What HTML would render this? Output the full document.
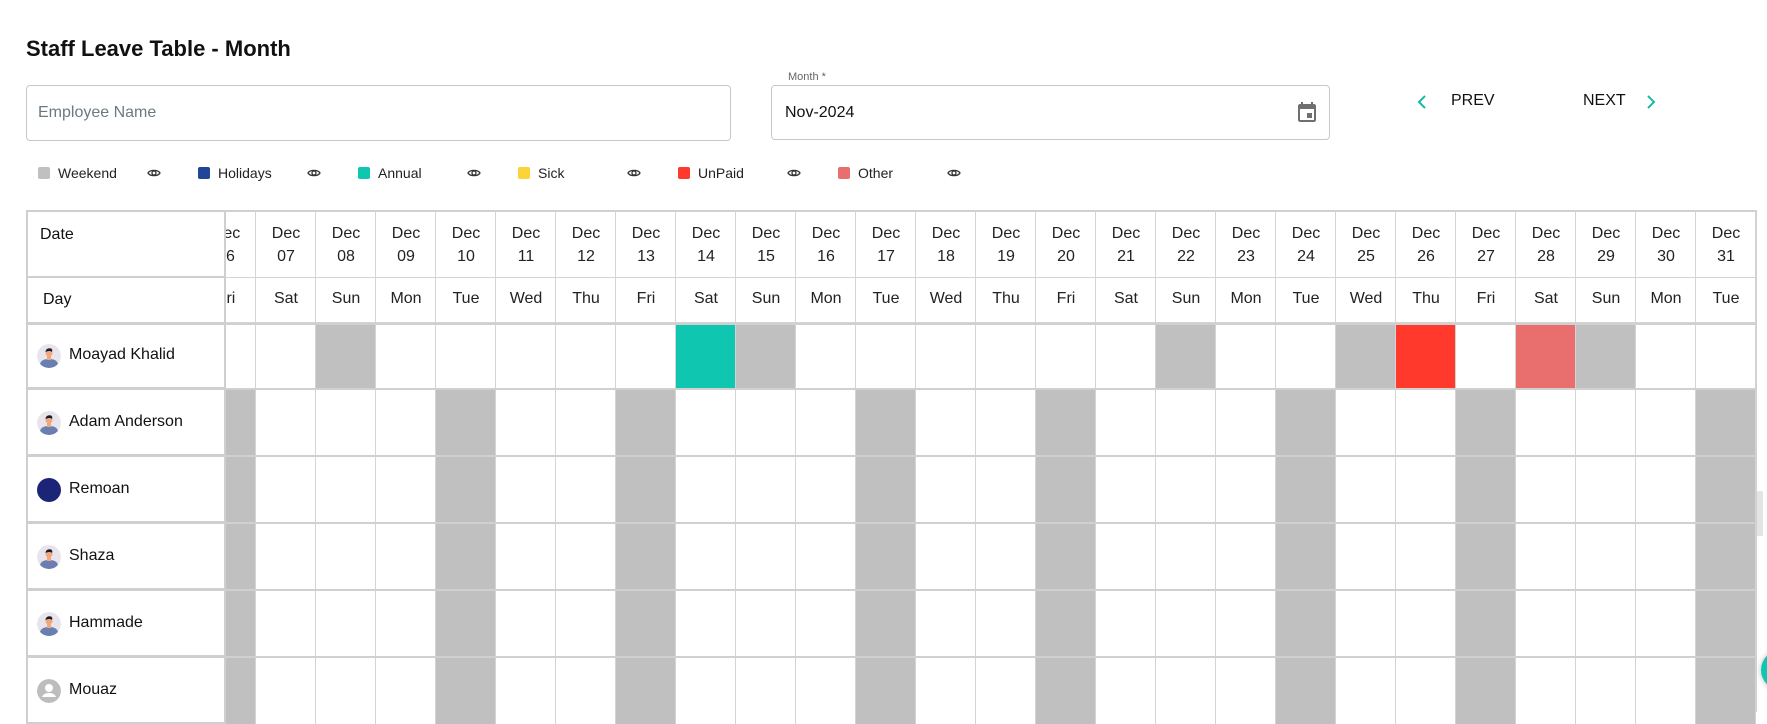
<!DOCTYPE html>
<html><head><meta charset="utf-8"><style>
*{box-sizing:border-box;margin:0;padding:0}
body{width:1767px;height:712px;overflow:hidden;background:#fff;font-family:"Liberation Sans",sans-serif;color:#111;position:relative}
.abs{position:absolute}
h1{position:absolute;left:26px;top:36px;font-size:22px;font-weight:bold;color:#111}
.inp{position:absolute;border:1px solid #c8c8c8;border-radius:4px}
.lg{position:absolute;top:166px;font-size:14px;color:#222;line-height:14px}
.sq{position:absolute;top:167px;width:12px;height:12px;border-radius:2px}
.eye{position:absolute;top:167px}
.cell{position:absolute;border-right:1px solid #d4d4d4;text-align:center;font-size:16px;color:#222}
.hl{position:absolute;left:26px;width:200px;background:#fff;border:2px solid #cfcfcf;}
.nm{position:absolute;left:69px;font-size:16px;color:#111}
.av{position:absolute;left:37px;width:24px;height:24px;border-radius:50%}
</style></head><body>
<h1>Staff Leave Table - Month</h1>
<div class="inp" style="left:26px;top:85px;width:705px;height:56px"></div>
<div class="abs" style="left:38px;top:104px;font-size:16px;color:#6b7a80">Employee Name</div>
<div class="inp" style="left:771px;top:85px;width:559px;height:55px"></div>
<div class="abs" style="left:784px;top:71px;font-size:11px;color:#666;background:#fff;padding:0 4px">Month *</div>
<div class="abs" style="left:785px;top:104px;font-size:16px;color:#111">Nov-2024</div>
<svg class="abs" style="left:1295px;top:100px" width="24" height="24" viewBox="0 0 24 24"><path fill="#6f6f6f" d="M19 4h-1V2h-2v2H8V2H6v2H5c-1.1 0-2 .9-2 2v14c0 1.1.9 2 2 2h14c1.1 0 2-.9 2-2V6c0-1.1-.9-2-2-2zm0 16H5V9h14v11zM12 13h5v5h-5z"/></svg>
<svg class="abs" style="left:1415px;top:93px" width="14" height="18" viewBox="0 0 14 18"><path d="M10 3L4 9l6 6" stroke="#19b9a6" stroke-width="2" fill="none"/></svg>
<div class="abs" style="left:1451px;top:92px;font-size:16px;color:#111">PREV</div>
<div class="abs" style="left:1583px;top:92px;font-size:16px;color:#111">NEXT</div>
<svg class="abs" style="left:1644px;top:93px" width="14" height="18" viewBox="0 0 14 18"><path d="M4 3l6 6-6 6" stroke="#19b9a6" stroke-width="2" fill="none"/></svg>
<div id="legend"></div>
<div id="tbl"></div>
<script>
var L=[["Weekend","#c0c0c0"],["Holidays","#1f4699"],["Annual","#0fc6b0"],["Sick","#fdd33a"],["UnPaid","#ff3a2d"],["Other","#e96f6e"]];
var h="";
L.forEach(function(l,i){var x=38+i*160;
h+='<div class="sq" style="left:'+x+'px;background:'+l[1]+'"></div><div class="lg" style="left:'+(x+20)+'px">'+l[0]+'</div>'+
'<svg class="eye" style="left:'+(x+109)+'px" width="14" height="12" viewBox="0 0 14 12"><path d="M1 6C3 2.5 11 2.5 13 6C11 9.5 3 9.5 1 6Z" fill="none" stroke="#333" stroke-width="1.3"/><circle cx="7" cy="6" r="2" fill="none" stroke="#333" stroke-width="1.3"/></svg>';});
document.getElementById("legend").innerHTML=h;
var days=["Sun","Mon","Tue","Wed","Thu","Fri","Sat"];
var t='<div class="abs" style="left:26px;top:210px;width:1731px;height:2px;background:#d0d0d0"></div>';
var rows=[[324,389],[389,456],[456,523],[523,590],[590,657],[657,724]];
for(var d=6;d<=31;d++){var x=256+(d-7)*60;var dn=days[(d+6)%7];
t+='<div class="cell" style="left:'+x+'px;top:210px;width:60px;height:113px;border-bottom:1px solid #d4d4d4"></div>';
t+='<div class="abs" style="left:'+x+'px;top:222px;width:60px;text-align:center;font-size:16px;line-height:23px;color:#222">Dec<br>'+(d<10?"0"+d:d)+'</div>';
t+='<div class="abs" style="left:'+x+'px;top:277px;width:60px;height:1px;background:#d4d4d4"></div>';
t+='<div class="abs" style="left:'+x+'px;top:290px;width:60px;text-align:center;font-size:16px;color:#222">'+dn+'</div>';
rows.forEach(function(r,ri){var c="#fff";
if(ri==0){if([8,15,22,25,29].indexOf(d)>=0)c="#c0c0c0";if(d==14)c="#0fc6b0";if(d==26)c="#ff3a2d";if(d==28)c="#e96f6e";}
else{if(dn=="Tue"||dn=="Fri")c="#c0c0c0";}
t+='<div class="abs" style="left:'+x+'px;top:'+r[0]+'px;width:60px;height:'+(r[1]-r[0])+'px;background:'+c+';border-right:1px solid #d4d4d4"></div>';});
}
rows.forEach(function(r){t+='<div class="abs" style="left:26px;top:'+(r[0]-1)+'px;width:1731px;height:2px;background:#d0d0d0"></div>';});
t+='<div class="abs" style="left:1756px;top:210px;width:1px;height:502px;background:#d0d0d0"></div>';
t+='<div class="abs" style="left:26px;top:210px;width:2px;height:502px;background:#d0d0d0"></div>';
t+='<div class="hl" style="top:210px;height:68px"></div><div class="hl" style="top:276px;height:48px"></div>';
t+='<div class="abs" style="left:40px;top:226px;font-size:16px">Date</div><div class="abs" style="left:43px;top:291px;font-size:16px">Day</div>';
var names=["Moayad Khalid","Adam Anderson","Remoan","Shaza","Hammade","Mouaz"];
rows.forEach(function(r,i){
t+='<div class="hl" style="top:'+(r[0]-1)+'px;height:'+(r[1]-r[0]+1)+'px"></div>';
var cy=r[0]+(i==0?32:34);
var av;
if(i==2)av='<div class="av" style="top:'+(cy-12)+'px;background:#1c2478"></div>';
else if(i==5)av='<svg class="av" style="top:'+(cy-12)+'px" viewBox="0 0 24 24"><circle cx="12" cy="12" r="12" fill="#bdbdbd"/><circle cx="12" cy="9" r="4" fill="#fff"/><path d="M5 18c1-3 4-4 7-4s6 1 7 4z" fill="#fff"/></svg>';
else av='<svg class="av" style="top:'+(cy-12)+'px" viewBox="0 0 24 24"><circle cx="12" cy="12" r="12" fill="#e8e4ec"/><path d="M3 20c1-4 5-5 9-5s8 1 9 5c-2 3-6 4-9 4s-7-1-9-4z" fill="#6a7eb1"/><rect x="10" y="11" width="4" height="5" fill="#f2a77b"/><circle cx="12" cy="9" r="3.5" fill="#f2a77b"/><path d="M8.5 8c0-3 3-4.5 5.5-3.5 1.5.7 1.5 2 1 3.5-1-1-3-1.5-6.5 0z" fill="#1b1b2e"/></svg>';
t+=av+'<div class="nm" style="top:'+(cy-10)+'px">'+names[i]+'</div>';});
t+='<div class="abs" style="left:1757px;top:491px;width:6px;height:45px;background:#e4e4e4"></div>';
t+='<div class="abs" style="left:1761px;top:650px;width:40px;height:40px;border-radius:50%;background:#0fc6b0;box-shadow:0 0 6px #bbb"></div>';
document.getElementById("tbl").innerHTML=t;
</script>
</body></html>
